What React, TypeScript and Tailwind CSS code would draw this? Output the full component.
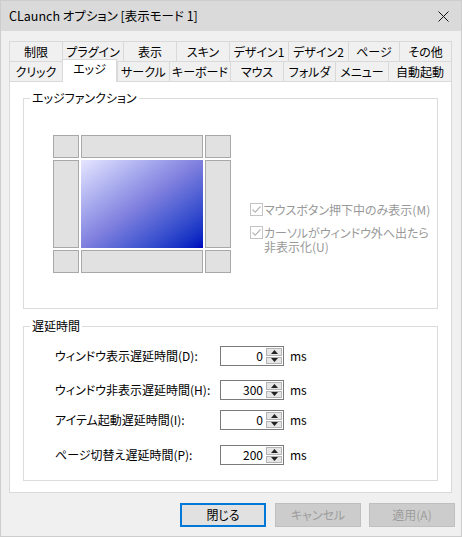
import React from 'react';

const row1 = [
  { label: '制限', w: 'w-[53px]' },
  { label: 'プラグイン', w: 'w-[61px]' },
  { label: '表示', w: 'w-[53px]' },
  { label: 'スキン', w: 'w-[53px]' },
  { label: 'デザイン1', w: 'w-[59px]' },
  { label: 'デザイン2', w: 'w-[60px]' },
  { label: 'ページ', w: 'w-[51px]' },
  { label: 'その他', w: 'w-[53px]' },
];

const row2 = [
  { label: 'クリック', w: 'w-[53px]' },
  { label: 'エッジ', w: 'w-[55px]', active: true },
  { label: 'サークル', w: 'w-[52px]' },
  { label: 'キーボード', w: 'w-[61px]' },
  { label: 'マウス', w: 'w-[53px]' },
  { label: 'フォルダ', w: 'w-[52px]' },
  { label: 'メニュー', w: 'w-[53px]' },
  { label: '自動起動', w: 'w-[64px]' },
];

const delays = [
  { label: 'ウィンドウ表示遅延時間(D):', value: '0', mt: 'mt-[12px]' },
  { label: 'ウィンドウ非表示遅延時間(H):', value: '300', mt: 'mt-[14px]' },
  { label: 'アイテム起動遅延時間(I):', value: '0', mt: 'mt-[10px]' },
  { label: 'ページ切替え遅延時間(P):', value: '200', mt: 'mt-[15px]' },
];

const Cell = () => <div className="bg-[#e1e1e1] border border-[#a8a8a8]" />;

const CheckBox = () => (
  <div className="w-[13px] h-[13px] border border-[#c4c4c4] bg-white flex items-center justify-center shrink-0">
    <svg width="11" height="11" viewBox="0 0 11 11">
      <path d="M1.5 5.5 L4.2 8.2 L9.5 2.5" fill="none" stroke="#b8b8b8" strokeWidth="1.2" />
    </svg>
  </div>
);

const Spin = ({ value }: { value: string }) => (
  <div className="w-[64px] h-[20px] border border-[#7a7a7a] bg-white flex">
    <div className="flex-1 text-right pr-[3px] leading-[18px]">{value}</div>
    <div className="w-[17px] flex flex-col gap-px p-px pl-0">
      <div className="flex-1 bg-[#e6e6e6] border border-[#b4b4b4] flex items-center justify-center">
        <svg width="7" height="4" viewBox="0 0 7 4"><path d="M0 4 L3.5 0 L7 4 Z" fill="#222" /></svg>
      </div>
      <div className="flex-1 bg-[#e6e6e6] border border-[#b4b4b4] flex items-center justify-center">
        <svg width="7" height="4" viewBox="0 0 7 4"><path d="M0 0 L3.5 4 L7 0 Z" fill="#222" /></svg>
      </div>
    </div>
  </div>
);

export default function App() {
  return (
    <div className="w-[462px] h-[537px] border border-[#cdcdcd] bg-[#f0f0f0] flex flex-col text-[12px] leading-[16px] text-black font-['Noto_Sans_CJK_JP','Noto_Sans',sans-serif] [font-feature-settings:'palt']">
      {/* title bar */}
      <div className="h-[30px] bg-[#dadada] flex items-center justify-between pl-[8px] pr-[12px] shrink-0">
        <span className="text-[12.5px]">CLaunch オプション [表示モード 1]</span>
        <svg width="11" height="11" viewBox="0 0 11 11">
          <path d="M0.5 0.5 L10.5 10.5 M10.5 0.5 L0.5 10.5" stroke="#111" strokeWidth="1" />
        </svg>
      </div>

      <div className="flex-1 flex flex-col pl-[8px] pr-[6px] pt-[10px]">
        {/* tabs */}
        <div className="flex h-[20px]">
          {row1.map((t, i) => (
            <div
              key={t.label}
              className={`${t.w} h-[20px] border-t border-l border-[#d9d9d9] flex items-center justify-center ${i === row1.length - 1 ? 'border-r' : ''}`}
            >
              {t.label}
            </div>
          ))}
        </div>
        <div className="flex h-[20px] items-end">
          {row2.map((t, i) =>
            t.active ? (
              <div
                key={t.label}
                className={`${t.w} h-[23px] -mb-px relative z-10 bg-white border-t border-l border-r border-[#d9d9d9] flex items-start justify-center pt-[1px]`}
              >
                {t.label}
              </div>
            ) : (
              <div
                key={t.label}
                className={`${t.w} h-[20px] border-t border-l border-[#d9d9d9] flex items-center justify-center ${i === row2.length - 1 ? 'border-r' : ''}`}
              >
                {t.label}
              </div>
            )
          )}
        </div>

        {/* panel */}
        <div className="w-[443px] h-[412px] border border-[#d9d9d9] bg-white px-[13px] pt-[8px]">
          <fieldset className="h-[219px] border border-[#dcdcdc] flex">
            <legend className="ml-[6px] px-[2px]">エッジファンクション</legend>
            <div className="flex items-start">
              <div className="ml-[29px] mt-[29px] grid grid-cols-[26px_122px_26px] grid-rows-[23px_88px_23px] gap-[2px]">
                <Cell />
                <Cell />
                <Cell />
                <Cell />
                <div className="-m-px border border-white bg-linear-to-br from-[#e6e6ff] via-[#7f7fde] to-[#0000bd]" />
                <Cell />
                <Cell />
                <Cell />
                <Cell />
              </div>
              <div className="ml-[19px] mt-[97px] flex flex-col gap-[9px] text-[#999999]">
                <div className="flex items-start gap-[1px]">
                  <CheckBox />
                  <div className="leading-[14px]">マウスボタン押下中のみ表示(M)</div>
                </div>
                <div className="flex items-start gap-[1px]">
                  <CheckBox />
                  <div className="flex flex-col">
                    <div className="h-[14px] leading-[14px]">カーソルがウィンドウ外へ出たら</div>
                    <div className="h-[14px] leading-[14px]">非表示化(U)</div>
                  </div>
                </div>
              </div>
            </div>
          </fieldset>

          <fieldset className="mt-[9px] h-[163px] border border-[#dcdcdc]">
            <legend className="ml-[6px] px-[2px]">遅延時間</legend>
            <div className="flex flex-col pl-[31px]">
              {delays.map((d) => (
                <div key={d.label} className={`${d.mt} flex items-center h-[20px]`}>
                  <div className="w-[165px]">{d.label}</div>
                  <Spin value={d.value} />
                  <span className="ml-[6px]">ms</span>
                </div>
              ))}
            </div>
          </fieldset>
        </div>

        {/* buttons */}
        <div className="mt-[10px] flex justify-end">
          <button className="w-[86px] h-[24px] border-2 border-[#0078d7] bg-[#e1e1e1]">閉じる</button>
          <button className="ml-[9px] w-[86px] h-[24px] border border-[#bfbfbf] bg-[#cccccc] text-[#9d9d9d]">キャンセル</button>
          <button className="ml-[8px] w-[86px] h-[24px] border border-[#bfbfbf] bg-[#cccccc] text-[#9d9d9d]">適用(A)</button>
        </div>
      </div>
    </div>
  );
}
